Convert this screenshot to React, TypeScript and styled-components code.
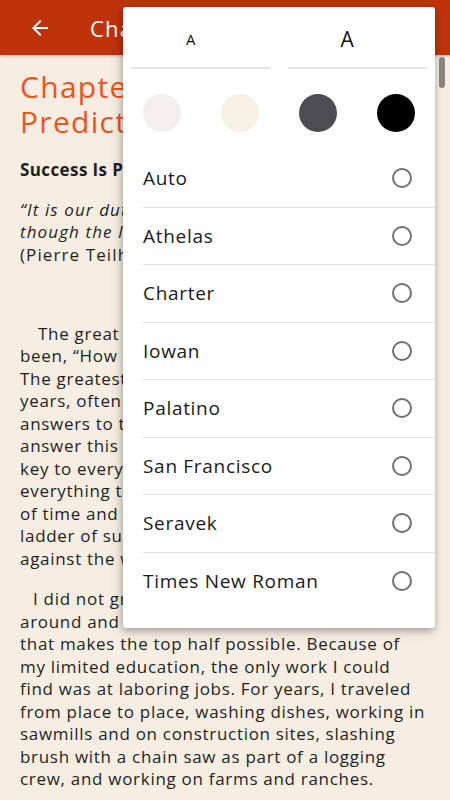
import styled, { createGlobalStyle } from "styled-components";

const GlobalStyle = createGlobalStyle`
  html, body {
    margin: 0;
    padding: 0;
    background: #f6eee2;
  }
  * {
    box-sizing: border-box;
  }
`;

const Screen = styled.div`
  position: relative;
  width: 450px;
  height: 800px;
  overflow: hidden;
  background-color: #f6eee2;
  font-family: "Open Sans", "Noto Sans", sans-serif;
`;

const Header = styled.header`
  height: 55px;
  display: flex;
  align-items: center;
  background-color: #bf330b;
  color: #ffffff;
  box-shadow: 0 1px 3px rgba(0, 0, 0, 0.25);
`;

const BackButton = styled.button`
  width: 24px;
  height: 24px;
  margin-left: 28px;
  padding: 0;
  border: none;
  background: none;
  color: #ffffff;
  display: flex;
`;

const HeaderTitle = styled.h1`
  margin: 0 0 0 38px;
  font-size: 22px;
  font-weight: 500;
  letter-spacing: 1.2px;
  white-space: nowrap;
`;

const Content = styled.main`
  padding: 14px 20px 0 20px;
  color: #1f1f1f;
  font-size: 17px;
  letter-spacing: 0.7px;
`;

const ChapterTitle = styled.h2`
  margin: 0;
  color: #f4511e;
  font-size: 30px;
  font-weight: 400;
  line-height: 35px;
  letter-spacing: 1.3px;
`;

const Heading = styled.h3`
  margin: 19px 0 0 0;
  font-size: 17px;
  font-weight: 700;
  line-height: 24px;
  letter-spacing: 0.4px;
`;

const Quote = styled.div`
  margin-top: 17px;
  line-height: 22.3px;
  letter-spacing: 1.1px;
`;

const Para = styled.div<{ $gap: number }>`
  margin-top: ${({ $gap }) => $gap}px;
  line-height: 22.5px;
`;

const Line = styled.div<{ $italic?: boolean; $indent?: number }>`
  white-space: nowrap;
  font-style: ${({ $italic }) => ($italic ? "italic" : "normal")};
  padding-left: ${({ $indent }) => $indent || 0}px;
`;

const ScrollThumb = styled.div`
  position: absolute;
  top: 57px;
  right: 5px;
  width: 6px;
  height: 31px;
  border-radius: 3px;
  background-color: #8c8680;
`;

const Popup = styled.div`
  position: absolute;
  top: 7px;
  left: 123px;
  width: 312px;
  padding-bottom: 18px;
  background-color: #ffffff;
  border-radius: 3px;
  box-shadow:
    0 2px 6px rgba(0, 0, 0, 0.22),
    -2px 4px 12px rgba(0, 0, 0, 0.18);
  font-family: "Open Sans", "Noto Sans", sans-serif;
`;

const SizeRow = styled.div`
  display: flex;
  gap: 17px;
  padding: 0 8px;
`;

const SizeButton = styled.button<{ $size: number }>`
  flex: 1;
  height: 62px;
  padding: 4px 20px 0 0;
  border: none;
  border-bottom: 2px solid #e7e7e7;
  background: none;
  color: #111111;
  font-family: inherit;
  font-size: ${({ $size }) => $size}px;
  font-weight: 400;
`;

const SwatchRow = styled.div`
  display: flex;
  justify-content: space-between;
  padding: 25px 20px 18px 20px;
`;

const Swatch = styled.div<{ $color: string }>`
  width: 38px;
  height: 38px;
  border-radius: 50%;
  background-color: ${({ $color }) => $color};
`;

const FontList = styled.ul`
  list-style: none;
  margin: 0;
  padding: 0 0 0 20px;
`;

const FontItem = styled.li<{ $last?: boolean }>`
  height: 57.5px;
  display: flex;
  align-items: center;
  justify-content: space-between;
  padding-right: 23px;
  border-bottom: ${({ $last }) => ($last ? "none" : "1px solid #e2e2e2")};
  color: #1a1a1a;
  font-size: 19px;
  letter-spacing: 0.7px;
`;

const Radio = styled.span`
  width: 20px;
  height: 20px;
  border-radius: 50%;
  border: 2px solid #707070;
`;

const fonts = [
  "Auto",
  "Athelas",
  "Charter",
  "Iowan",
  "Palatino",
  "San Francisco",
  "Seravek",
  "Times New Roman",
];

const swatches = ["#f2efee", "#f8f0e4", "#4d4c52", "#000000"];

const firstPara = [
  "The great question of my life has",
  "been, “How do you become successful?”",
  "The greatest minds have pondered it for",
  "years, often without finding the right",
  "answers to the most important questions. To",
  "answer this question, I discovered the",
  "key to every success. I learned that",
  "everything takes place over a period",
  "of time and that you climb the great",
  "ladder of success step by step, often",
  "against the wind and the odds.",
];

const secondPara = [
  "I did not graduate from high school. I drifted",
  "around and worked at the bottom half",
  "that makes the top half possible. Because of",
  "my limited education, the only work I could",
  "find was at laboring jobs. For years, I traveled",
  "from place to place, washing dishes, working in",
  "sawmills and on construction sites, slashing",
  "brush with a chain saw as part of a logging",
  "crew, and working on farms and ranches.",
];

export default function App() {
  return (
    <Screen>
      <GlobalStyle />
      <Header>
        <BackButton aria-label="Back">
          <svg width="24" height="24" viewBox="0 0 24 24" fill="currentColor">
            <path d="M20 11H7.83l5.59-5.59L12 4l-8 8 8 8 1.41-1.41L7.83 13H20v-2z" />
          </svg>
        </BackButton>
        <HeaderTitle>Chapter 1</HeaderTitle>
      </Header>

      <Content>
        <ChapterTitle>
          Chapter 1: Success Is
          <br />
          Predictable
        </ChapterTitle>
        <Heading>Success Is Predictable</Heading>
        <Quote>
          <Line $italic>“It is our duty as men and women to</Line>
          <Line $italic>though the limits of our abilities do</Line>
          <Line>(Pierre Teilhard de Chardin)</Line>
        </Quote>
        <Para $gap={57}>
          {firstPara.map((t, i) => (
            <Line key={i} $indent={i === 0 ? 18 : 0}>
              {t}
            </Line>
          ))}
        </Para>
        <Para $gap={18}>
          {secondPara.map((t, i) => (
            <Line key={i} $indent={i === 0 ? 13 : 0}>
              {t}
            </Line>
          ))}
        </Para>
      </Content>

      <ScrollThumb />

      <Popup>
        <SizeRow>
          <SizeButton $size={15}>A</SizeButton>
          <SizeButton $size={21}>A</SizeButton>
        </SizeRow>
        <SwatchRow>
          {swatches.map((c) => (
            <Swatch key={c} $color={c} />
          ))}
        </SwatchRow>
        <FontList>
          {fonts.map((f, i) => (
            <FontItem key={f} $last={i === fonts.length - 1}>
              {f}
              <Radio />
            </FontItem>
          ))}
        </FontList>
      </Popup>
    </Screen>
  );
}
